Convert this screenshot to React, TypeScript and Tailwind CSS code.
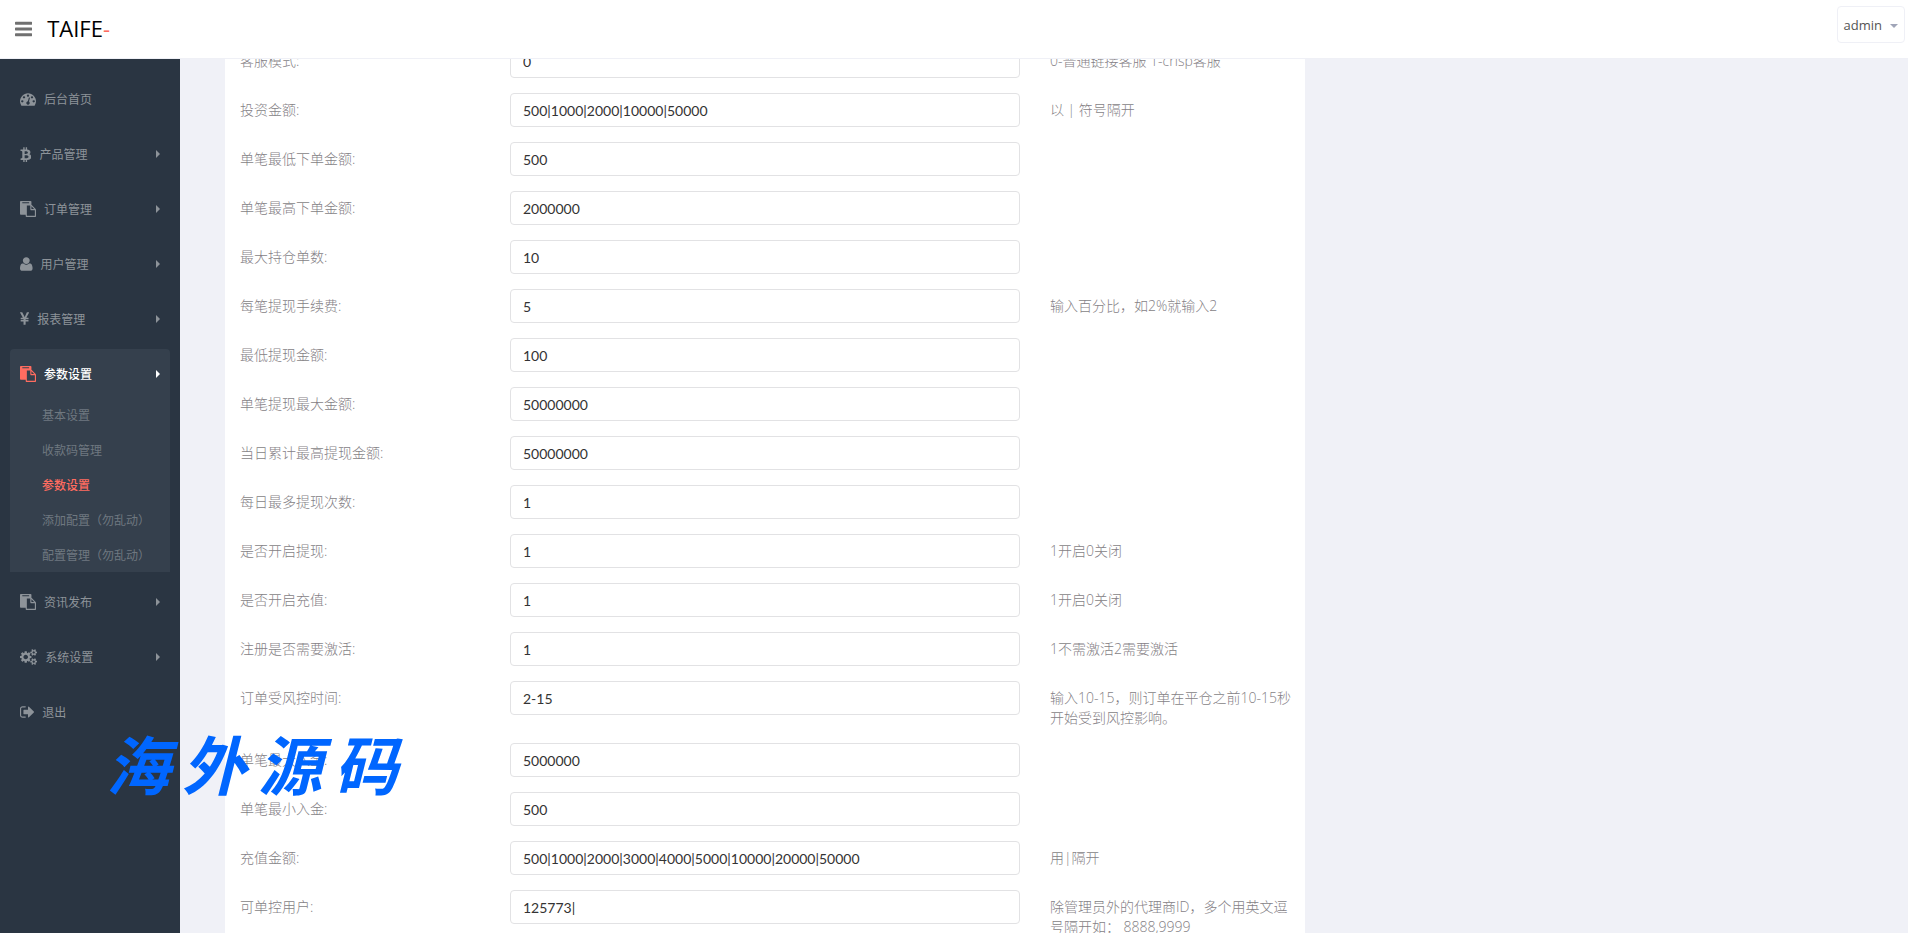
import clsx from "clsx";

type Glyph = { width: number; x: number; path: string };

const glyphs = {
  bars: {
    x: 128,
    width: 1536,
    path: "M1664 1344v128q0 26-19 45t-45 19h-1408q-26 0-45-19t-19-45v-128q0-26 19-45t45-19h1408q26 0 45 19t19 45zm0-512v128q0 26-19 45t-45 19h-1408q-26 0-45-19t-19-45v-128q0-26 19-45t45-19h1408q26 0 45 19t19 45zm0-512v128q0 26-19 45t-45 19h-1408q-26 0-45-19t-19-45v-128q0-26 19-45t45-19h1408q26 0 45 19t19 45z",
  },
  dashboard: {
    x: 0,
    width: 1792,
    path: "M384 1152q0-53-37.5-90.5t-90.5-37.5-90.5 37.5-37.5 90.5 37.5 90.5 90.5 37.5 90.5-37.5 37.5-90.5zm192-448q0-53-37.5-90.5t-90.5-37.5-90.5 37.5-37.5 90.5 37.5 90.5 90.5 37.5 90.5-37.5 37.5-90.5zm428 481l101-382q6-26-7.5-48.5t-38.5-29.5-48 6.5-30 39.5l-101 382q-60 5-107 43.5t-63 98.5q-20 77 20 146t117 89 146-20 89-117q16-60-6-117t-72-91zm660-33q0-53-37.5-90.5t-90.5-37.5-90.5 37.5-37.5 90.5 37.5 90.5 90.5 37.5 90.5-37.5 37.5-90.5zm-640-640q0-53-37.5-90.5t-90.5-37.5-90.5 37.5-37.5 90.5 37.5 90.5 90.5 37.5 90.5-37.5 37.5-90.5zm448 192q0-53-37.5-90.5t-90.5-37.5-90.5 37.5-37.5 90.5 37.5 90.5 90.5 37.5 90.5-37.5 37.5-90.5zm320 448q0 261-141 483-19 29-54 29h-1402q-35 0-54-29-141-221-141-483 0-182 71-348t191-286 286-191 348-71 348 71 286 191 191 286 71 348z",
  },
  bitcoin: {
    x: 241,
    width: 1280,
    path: "M1407 663q18 182-131 258 117 28 175 103t45 214q-7 71-32.5 125t-64.5 89-97 58.5-121.5 34.5-145.5 15v255h-154v-251q-80 0-122-1v252h-154v-255q-18 0-54-.5t-55-.5h-200l31-183h111q50 0 58-51v-402h16q-6-1-16-1v-287q-13-68-89-68h-111v-164l212 1q64 0 97-1v-252h154v247q82-2 122-2v-245h154v252q79 7 140 22.5t113 45 82.5 78 36.5 114.5zm-215 545q0-36-15-64t-37-46-57.5-30.5-65.5-18.5-74-9-69-3-64.5 1-47.5 1v338q8 0 37 .5t48 .5 53-1.5 58.5-4 57-8.5 55.5-14 47.5-21 39.5-30 24.5-40 9.5-51zm-71-476q0-33-12.5-58.5t-30.5-42-48-28-55-16.5-61.5-8-58-2.5-54 1-39.5.5v307q5 0 34.5.5t46.5 0 50-2 55-5.5 51.5-11 48.5-18.5 37-27 27-38.5 9-51z",
  },
  paste: {
    x: 0,
    width: 1792,
    path: "M768 1664h896v-640h-416q-40 0-68-28t-28-68v-416h-384v1152zm256-1440v-64q0-13-9.5-22.5t-22.5-9.5h-704q-13 0-22.5 9.5t-9.5 22.5v64q0 13 9.5 22.5t22.5 9.5h704q13 0 22.5-9.5t9.5-22.5zm256 672h299l-299-299v299zm512 128v672q0 40-28 68t-68 28h-960q-40 0-68-28t-28-68v-160h-544q-40 0-68-28t-28-68v-1344q0-40 28-68t68-28h1088q40 0 68 28t28 68v328q21 13 36 28l408 408q28 28 48 76t20 88z",
  },
  user: {
    x: 192,
    width: 1408,
    path: "M1600 1405q0 120-73 189.5t-194 69.5h-874q-121 0-194-69.5t-73-189.5q0-53 3.500-103.500t14-109 26.500-108.500 43-97.500 62-81 85.500-53.500 111.500-20q9 0 42 21.500t74.500 48 108 48 133.500 21.500 133.500-21.500 108-48 74.500-48 42-21.500q61 0 111.500 20t85.500 53.500 62 81 43 97.500 26.500 108.500 14 109 3.500 103.500zm-320-893q0 159-112.500 271.500t-271.500 112.500-271.500-112.500-112.500-271.500 112.500-271.500 271.500-112.500 271.500 112.500 112.500 271.500z",
  },
  yen: {
    x: 386,
    width: 1027,
    path: "M985.5 1536h-172q-13 0-22.5-9t-9.5-23v-330h-288q-13 0-22.5-9t-9.5-23v-103q0-13 9.5-22.500t22.500-9.500h288v-85h-288q-13 0-22.500-9t-9.500-23v-104q0-13 9.500-22.500t22.500-9.500h214l-321-578q-8-16 0-32 10-16 28-16h194q19 0 29 18l215 425q19 38 56 125 10-24 30.500-68t27.500-61l191-420q8-19 29-19h191q17 0 27 16 9 14 1 31l-313 579h215q13 0 22.500 9.500t9.500 22.500v104q0 14-9.500 23t-22.500 9h-290v85h290q13 0 22.500 9.500t9.500 22.500v103q0 14-9.500 23t-22.500 9h-290v330q0 13-9.500 22.500t-22.500 9.500z",
  },
  cogs: {
    x: 0,
    width: 1920,
    path: "M896 896q0-106-75-181t-181-75-181 75-75 181 75 181 181 75 181-75 75-181zm768 512q0-52-38-90t-90-38-90 38-38 90q0 53 37.5 90.5t90.5 37.5 90.5-37.5 37.5-90.5zm0-1024q0-52-38-90t-90-38-90 38-38 90q0 53 37.5 90.5t90.5 37.5 90.5-37.5 37.5-90.5zm-384 421v185q0 10-7 19.5t-16 10.5l-155 24q-11 35-32 76 34 48 90 115 7 11 7 20 0 12-7 19-23 30-82.5 89.5t-78.5 59.5q-11 0-21-7l-115-90q-37 19-77 31-11 108-23 155-7 24-30 24h-186q-11 0-20-7.5t-10-17.5l-23-153q-34-10-75-31l-118 89q-7 7-20 7-11 0-21-8-144-133-144-160 0-9 7-19 10-14 41-53t47-61q-23-44-35-82l-152-24q-10-1-17-9.5t-7-19.5v-185q0-10 7-19.5t16-10.5l155-24q11-35 32-76-34-48-90-115-7-11-7-20 0-12 7-20 22-30 82-89t79-59q11 0 21 7l115 90q34-18 77-32 11-108 23-154 7-24 30-24h186q11 0 20 7.5t10 17.5l23 153q34 10 75 31l118-89q8-7 20-7 11 0 21 8 144 133 144 160 0 8-7 19-12 16-42 54t-45 60q23 48 34 82l152 23q10 2 17 10.5t7 19.5zm640 533v140q0 16-149 31-12 27-30 52 51 113 51 138 0 4-4 7-122 71-124 71-8 0-46-47t-52-68q-20 2-30 2t-30-2q-14 21-52 68t-46 47q-2 0-124-71-4-3-4-7 0-25 51-138-18-25-30-52-149-15-149-31v-140q0-16 149-31 13-29 30-52-51-113-51-138 0-4 4-7 4-2 35-20t59-34 30-16q8 0 46 46.5t52 67.5q20-2 30-2t30 2q51-71 92-112l6-2q4 0 124 70 4 3 4 7 0 25-51 138 17 23 30 52 149 15 149 31zm0-1024v140q0 16-149 31-12 27-30 52 51 113 51 138 0 4-4 7-122 71-124 71-8 0-46-47t-52-68q-20 2-30 2t-30-2q-14 21-52 68t-46 47q-2 0-124-71-4-3-4-7 0-25 51-138-18-25-30-52-149-15-149-31v-140q0-16 149-31 13-29 30-52-51-113-51-138 0-4 4-7 4-2 35-20t59-34 30-16q8 0 46 46.5t52 67.5q20-2 30-2t30 2q51-71 92-112l6-2q4 0 124 70 4 3 4 7 0 25-51 138 17 23 30 52 149 15 149 31z",
  },
  signOut: {
    x: 64,
    width: 1600,
    path: "M704 1440q0 4 1 20t.5 26.5-3 23.5-10 19.5-20.5 6.5h-320q-119 0-203.5-84.5t-84.5-203.5v-704q0-119 84.5-203.5t203.5-84.5h320q13 0 22.5 9.5t9.5 22.5q0 4 1 20t.5 26.5-3 23.5-10 19.5-20.5 6.5h-320q-66 0-113 47t-47 113v704q0 66 47 113t113 47h312l11.5 1 11.5 3 8 5.5 7 9 2 13.5zm928-544q0 26-19 45l-544 544q-19 19-45 19t-45-19-19-45v-288h-448q-26 0-45-19t-19-45v-384q0-26 19-45t45-19h448v-288q0-26 19-45t45-19 45 19l544 544q19 19 19 45z",
  },
} satisfies Record<string, Glyph>;

type GlyphName = keyof typeof glyphs;

function Icon({ name, className }: { name: GlyphName; className: string }) {
  const glyph = glyphs[name];
  return (
    <svg
      viewBox={`${glyph.x} 0 ${glyph.width} 1792`}
      className={clsx("w-auto shrink-0 fill-current", className)}
      aria-hidden="true"
    >
      <path d={glyph.path} />
    </svg>
  );
}

type MenuItem = { icon: GlyphName; label: string; leaf?: boolean; children?: string[] };

const menu: MenuItem[] = [
  { icon: "dashboard", label: "后台首页", leaf: true },
  { icon: "bitcoin", label: "产品管理" },
  { icon: "paste", label: "订单管理" },
  { icon: "user", label: "用户管理" },
  { icon: "yen", label: "报表管理" },
  {
    icon: "paste",
    label: "参数设置",
    children: ["基本设置", "收款码管理", "参数设置", "添加配置（勿乱动）", "配置管理（勿乱动）"],
  },
  { icon: "paste", label: "资讯发布" },
  { icon: "cogs", label: "系统设置" },
  { icon: "signOut", label: "退出", leaf: true },
];

type Field = { label: string; value: string; hint?: string };

const fields: Field[] = [
  { label: "客服模式:", value: "0", hint: "0-普通链接客服 1-crisp客服" },
  { label: "投资金额:", value: "500|1000|2000|10000|50000", hint: "以 | 符号隔开" },
  { label: "单笔最低下单金额:", value: "500" },
  { label: "单笔最高下单金额:", value: "2000000" },
  { label: "最大持仓单数:", value: "10" },
  { label: "每笔提现手续费:", value: "5", hint: "输入百分比，如2%就输入2" },
  { label: "最低提现金额:", value: "100" },
  { label: "单笔提现最大金额:", value: "50000000" },
  { label: "当日累计最高提现金额:", value: "50000000" },
  { label: "每日最多提现次数:", value: "1" },
  { label: "是否开启提现:", value: "1", hint: "1开启0关闭" },
  { label: "是否开启充值:", value: "1", hint: "1开启0关闭" },
  { label: "注册是否需要激活:", value: "1", hint: "1不需激活2需要激活" },
  { label: "订单受风控时间:", value: "2-15", hint: "输入10-15，则订单在平仓之前10-15秒开始受到风控影响。" },
  { label: "单笔最大入金:", value: "5000000" },
  { label: "单笔最小入金:", value: "500" },
  { label: "充值金额:", value: "500|1000|2000|3000|4000|5000|10000|20000|50000", hint: "用|隔开" },
  { label: "可单控用户:", value: "125773|", hint: "除管理员外的代理商ID，多个用英文逗号隔开如： 8888,9999" },
];

function Header() {
  return (
    <header className="z-10 flex h-[59px] shrink-0 items-start justify-between border-b border-[#eff0f6] bg-white pr-[3px] pl-[15px]">
      <div className="flex h-[58px] items-center gap-[15px]">
        <button type="button" aria-label="菜单" className="text-[#707070]">
          <Icon name="bars" className="h-5" />
        </button>
        <a href="#" className="pb-0.5 font-['Open_Sans',sans-serif] text-[22px] text-black">
          TAIFE<span className="text-[#ff6c60]">-</span>
        </a>
      </div>
      <button
        type="button"
        className="mt-1.5 flex h-[37px] items-center gap-2 rounded border border-[#eff0f6] px-1.5 pt-0.5 font-['Open_Sans',sans-serif] text-[13px] text-[#555]"
      >
        admin
        <svg viewBox="0 0 8 4" className="h-1 w-2 fill-[#a0a5b8]" aria-hidden="true">
          <path d="M0 0h8L4 4z" />
        </svg>
      </button>
    </header>
  );
}

function Sidebar() {
  return (
    <nav className="w-[180px] shrink-0 bg-[#2a3542] px-2.5 pt-[15px] text-xs">
      <ul className="space-y-[5px]">
        {menu.map((item) => {
          const open = Boolean(item.children);
          return (
            <li key={item.label} className={clsx(open && "rounded-t bg-[#35404d]")}>
              <a
                href="#"
                className={clsx(
                  "flex items-center px-2.5",
                  open ? "h-12 pt-0.5 font-medium text-white" : "h-[50px] text-[#8d9399]"
                )}
              >
                <Icon name={item.icon} className={clsx("h-4", open && "text-[#ff6c60]")} />
                <span className="ml-2 flex-1 pt-0.5">{item.label}</span>
                {!item.leaf && (
                  <svg viewBox="0 0 4 8" className="h-2 w-1 fill-current" aria-hidden="true">
                    <path d="M0 0l4 4-4 4z" />
                  </svg>
                )}
              </a>
              {item.children && (
                <ul>
                  {item.children.map((child) => (
                    <li key={child}>
                      <a
                        href="#"
                        className={clsx(
                          "flex h-[35px] items-center pt-0.5 pl-8 whitespace-nowrap",
                          child === item.label ? "font-medium text-[#ff6c60]" : "text-[#6f7880]"
                        )}
                      >
                        {child}
                      </a>
                    </li>
                  ))}
                </ul>
              )}
            </li>
          );
        })}
      </ul>
    </nav>
  );
}

function FieldRow({ field, id }: { field: Field; id: string }) {
  return (
    <div className="grid grid-cols-12 text-sm/5 font-light text-[#857f86]">
      <label htmlFor={id} className="col-span-3 px-[15px] pt-[7px]">
        {field.label}
      </label>
      <div className="col-span-6 px-[15px]">
        <input
          id={id}
          type="text"
          defaultValue={field.value}
          className="block h-[34px] w-full rounded border border-[#e2e2e4] bg-white px-3 font-['Lato',sans-serif] text-sm font-normal text-[#333] outline-none"
        />
      </div>
      <p className="col-span-3 pt-[7px] pr-2 pl-[15px]">{field.hint}</p>
    </div>
  );
}

export default function App() {
  return (
    <div className="relative flex h-screen flex-col overflow-hidden bg-[#f0f1f7] font-['Open_Sans','Noto_Sans_CJK_SC',sans-serif]">
      <Header />
      <div className="flex min-h-0 flex-1">
        <Sidebar />
        <main className="min-w-0 flex-1 overflow-hidden pr-[63px] pl-[45px]">
          {/* form is scrolled so its first row sits partly under the header */}
          <form className="-mt-[15px] w-2/3 space-y-[15px] bg-white pb-[15px]">
            {fields.map((field, i) => (
              <FieldRow key={field.label} field={field} id={`field-${i}`} />
            ))}
          </form>
        </main>
      </div>
      <div className="pointer-events-none absolute top-[733px] left-[100px] z-20 grid w-[304px] grid-cols-4 text-center text-[64px] leading-[66px] font-bold text-[#0066ff] italic">
        {["海", "外", "源", "码"].map((char) => (
          <span key={char}>{char}</span>
        ))}
      </div>
    </div>
  );
}
